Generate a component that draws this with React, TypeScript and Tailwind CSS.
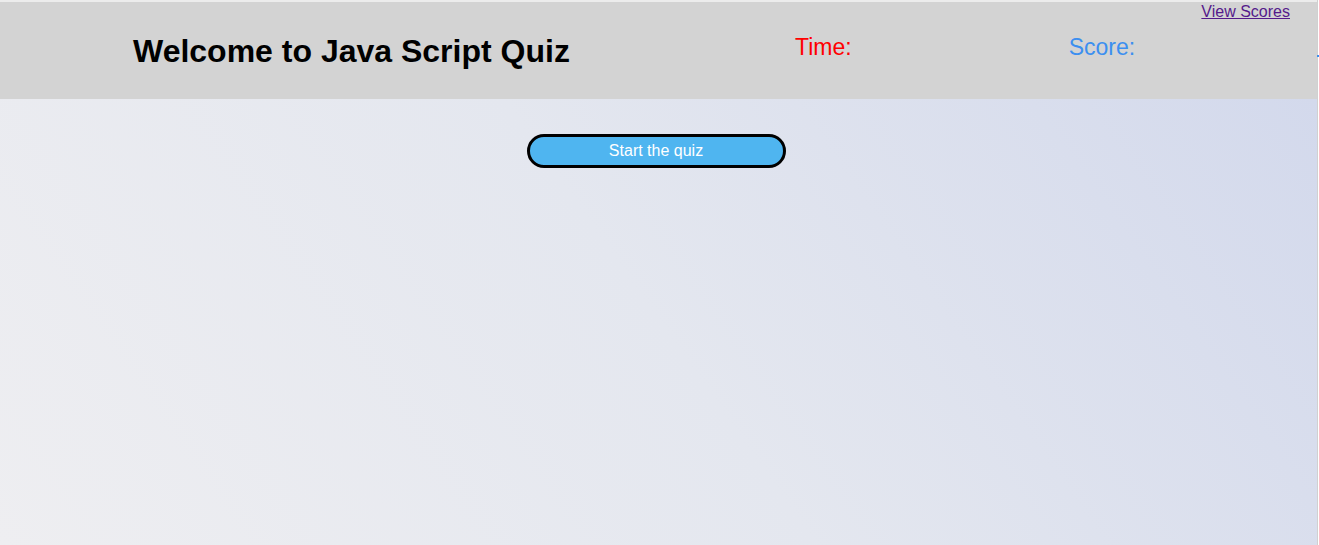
import React from "react";

export default function App() {
  return (
    <div className="flex h-[545px] w-[1319px] overflow-hidden bg-white font-['Liberation_Sans',Arial,sans-serif]">
      <div className="flex h-full w-[1317px] flex-col">
        <div className="h-[2px] bg-[#ececec]" />
        <header className="relative flex h-[97px] items-center bg-[#d3d3d3]">
          <h1 className="ml-[133px] w-[436px] whitespace-nowrap text-[32px] font-bold leading-none text-black">
            Welcome to Java Script Quiz
          </h1>
          <div className="ml-[226px] -mt-[7px] text-[23px] leading-none text-[#ff0000]">Time:</div>
          <div className="ml-[217px] -mt-[7px] text-[23px] leading-none text-[#3c8ff0]">Score:</div>
          <a href="#" className="absolute right-[27px] top-[1px] text-[16px] leading-[18px] text-[#551a8b] underline">
            View Scores
          </a>
        </header>
        <main className="flex flex-1 flex-col items-center bg-[linear-gradient(55deg,#eeeef1_0%,#e4e7ef_50%,#d3d9ec_100%)] pt-[35px]">
          <button className="ml-[-5px] flex h-[34px] w-[259px] items-center justify-center rounded-full border-[3px] border-black bg-[#4fb5f0] text-[16px] leading-none text-white">
            Start the quiz
          </button>
        </main>
      </div>
      <div className="relative h-full w-[2px] border-l border-[#d0d0d0] bg-white">
        <div className="absolute left-[-1px] top-[55px] h-[2px] w-[2px] bg-[#3c8ff0]" />
      </div>
    </div>
  );
}
